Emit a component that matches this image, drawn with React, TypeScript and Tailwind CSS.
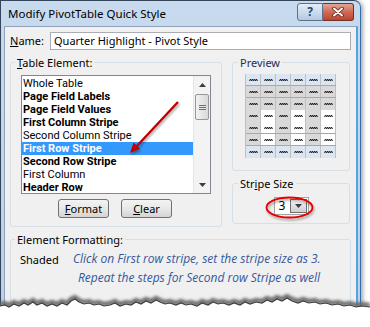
import React from "react";

const ITEMS = [
  { label: "Whole Table", bold: false },
  { label: "Page Field Labels", bold: true },
  { label: "Page Field Values", bold: true },
  { label: "First Column Stripe", bold: true },
  { label: "Second Column Stripe", bold: false },
  { label: "First Row Stripe", bold: true, selected: true },
  { label: "Second Row Stripe", bold: true },
  { label: "First Column", bold: false },
  { label: "Header Row", bold: true },
];

const FILL: Record<string, string> = {
  b: "bg-[#dce6f2]",
  g: "bg-[#d9d9d9]",
  w: "bg-white",
};

const PREVIEW_ROWS = [
  { cells: "bbbbbb", line: true },
  { cells: "gggggg", line: true },
  { cells: "gggggg", line: false },
  { cells: "gwgwgw", line: false },
  { cells: "gwgwgw", line: true },
  { cells: "gwgwgw", line: true },
  { cells: "bbbbbb", line: false },
];

const TORN = [
  [0, 306], [5, 305], [9, 307], [14, 304], [19, 306], [24, 303], [28, 305], [33, 302],
  [37, 305], [42, 303], [47, 306], [52, 304], [57, 306], [62, 303], [67, 305], [71, 301],
  [75, 299], [79, 302], [84, 304], [89, 303], [94, 305], [99, 304], [104, 306], [110, 305],
  [115, 303], [120, 306], [126, 304], [131, 305], [136, 302], [141, 304], [146, 301],
  [151, 303], [156, 300], [160, 302], [165, 304], [170, 303], [176, 305], [181, 303],
  [186, 305], [191, 304], [197, 306], [202, 303], [208, 305], [213, 302], [218, 304],
  [223, 303], [229, 305], [234, 303], [240, 305], [245, 302], [250, 304], [256, 302],
  [262, 303], [267, 300], [272, 302], [277, 299], [282, 301], [287, 298], [292, 301],
  [298, 303], [303, 301], [309, 303], [315, 302], [320, 304], [326, 303], [332, 305],
  [338, 304], [344, 306], [350, 305], [356, 307], [362, 306], [370, 307],
];

function Squiggle() {
  return (
    <svg width="9" height="4" viewBox="0 0 9 4">
      <polyline
        points="0.5,3 1.5,1 2.5,3 3.5,1 4.5,3 5.5,1 6.5,3 7.5,1 8.5,3"
        fill="none"
        stroke="#111"
        strokeWidth="0.9"
      />
    </svg>
  );
}

function Tri({ down }: { down?: boolean }) {
  return (
    <svg width="7" height="4" viewBox="0 0 7 4">
      <polygon points={down ? "0,0 7,0 3.5,4" : "0,4 7,4 3.5,0"} fill="#3c3c3c" />
    </svg>
  );
}

function WinButton({ children }: { children: React.ReactNode }) {
  return (
    <button className="w-[51px] h-[19px] rounded-[3px] border border-[#707070] bg-linear-to-b from-[#f3f3f3] via-[#e8e8e8] to-[#d4d4d4] text-[11px] leading-none text-black">
      {children}
    </button>
  );
}

export default function App() {
  const tornPath =
    "M" + TORN.map(([x, y]) => `${x},${y}`).join(" L") + " L370,327 L0,327 Z";
  const tornLine = "M" + TORN.map(([x, y]) => `${x},${y}`).join(" L");

  return (
    <div className="relative w-[370px] h-[327px] bg-white overflow-hidden font-['Noto_Sans',sans-serif] text-[11px] text-black">
      <div className="w-[361px] h-[316px] border border-[#34455a] border-r-[#2f6fae] rounded-tr-[7px] bg-linear-to-b from-[#c7daee] to-[#bcd1e9] pl-[3px] pr-[2px] flex flex-col shadow-[2px_1px_4px_rgba(0,0,0,0.35)]">
        {/* title bar */}
        <div className="h-[25px] flex items-start">
          <div className="pl-[4px] pt-[5px] text-[11.5px] leading-[15px]">Modify PivotTable Quick Style</div>
          <div className="ml-auto mt-[2px] mr-[4px] flex">
            <div className="w-[26px] h-[18px] rounded-l-[3px] border border-[#5f718a] bg-linear-to-b from-[#e3edf8] to-[#b3cae4] flex items-center justify-center text-[12px] font-bold leading-none text-[#2d4669]">
              ?
            </div>
            <div className="w-[31px] h-[18px] rounded-r-[3px] border border-l-0 border-[#6e3228] bg-linear-to-b from-[#e3a595] via-[#cf6a55] to-[#c0432e] flex items-center justify-center">
              <svg width="12" height="10" viewBox="0 0 12 10">
                <path d="M2,1.5 L10,8.5 M10,1.5 L2,8.5" stroke="#5a2218" strokeWidth="3.6" strokeLinecap="round" />
                <path d="M2,1.5 L10,8.5 M10,1.5 L2,8.5" stroke="#fff" strokeWidth="2" strokeLinecap="round" />
              </svg>
            </div>
          </div>
        </div>

        {/* client area */}
        <div className="flex-1 bg-[#f0f0f0] border border-b-0 border-[#8fa3bd] border-r-[#5aa2dc] border-r-2 px-[5px] pt-[5px] flex flex-col">
          <div className="flex items-center h-[18px]">
            <span>
              <span className="underline">N</span>ame:
            </span>
            <div className="ml-auto w-[301px] h-[18px] border border-[#abadb3] bg-white pl-[3px] flex items-center">
              Quarter Highlight - Pivot Style
            </div>
          </div>

          <div className="mt-[5px] flex gap-[10px]">
            <fieldset className="w-[212px] border border-[#d5dfe5] rounded-[3px] px-[10px] pt-[5px] pb-[8px]">
              <legend className="-ml-[6px] px-[2px] leading-[15px]">
                <span className="underline">T</span>able Element:
              </legend>
              <div className="h-[119px] border border-[#828790] bg-white flex">
                <div className="flex-1 pt-[1px] font-['Roboto',sans-serif] text-[11px]">
                  {ITEMS.map((it) => (
                    <div
                      key={it.label}
                      className={
                        "h-[13px] pl-[1px] whitespace-nowrap leading-[13px] " +
                        (it.bold ? "font-bold " : "") +
                        (it.selected ? "bg-[#3399ff] text-white" : "")
                      }
                    >
                      {it.label}
                    </div>
                  ))}
                </div>
                <div className="w-[17px] border-l border-[#e6e6e6] bg-[#f3f3f3] flex flex-col items-center">
                  <div className="h-[17px] flex items-center justify-center">
                    <Tri />
                  </div>
                  <div className="mt-[1px] w-[14px] h-[26px] rounded-[2px] border border-[#979797] bg-linear-to-r from-[#f2f2f2] to-[#d9d9d9] flex flex-col items-center justify-center gap-[1px]">
                    <div className="w-[7px] h-px bg-[#6f6f6f]" />
                    <div className="w-[7px] h-px bg-[#6f6f6f]" />
                    <div className="w-[7px] h-px bg-[#6f6f6f]" />
                  </div>
                  <div className="mt-auto h-[17px] flex items-center justify-center">
                    <Tri down />
                  </div>
                </div>
              </div>
              <div className="mt-[5px] flex gap-[12px] pl-[37px]">
                <WinButton>
                  <span className="underline">F</span>ormat
                </WinButton>
                <WinButton>
                  <span className="underline">C</span>lear
                </WinButton>
              </div>
            </fieldset>

            <div className="w-[118px] flex flex-col">
              <fieldset className="border border-[#d5dfe5] rounded-[3px] pl-[12px] pt-[4px] pb-[12px]">
                <legend className="-ml-[7px] px-[2px] leading-[15px] text-[#1d2f55]">Preview</legend>
                <div className="w-[91px] border-l border-[#c0c0c0]">
                  {PREVIEW_ROWS.map((row, r) => (
                    <div
                      key={r}
                      className={"h-[12px] flex " + (row.line ? "border-b border-[#95abc9]" : "")}
                    >
                      {row.cells.split("").map((c, i) => (
                        <div
                          key={i}
                          className={"w-[15px] border-r border-[#c0c0c0] flex items-center justify-center " + FILL[c]}
                        >
                          <Squiggle />
                        </div>
                      ))}
                    </div>
                  ))}
                </div>
              </fieldset>

              <fieldset className="mt-[5px] border border-[#d5dfe5] rounded-[3px] pt-[6px] pb-[8px] flex justify-center">
                <legend className="ml-[5px] px-[2px] leading-[15px]">
                  Str<span className="underline">i</span>pe Size
                </legend>
                <div className="mx-auto w-[35px] h-[18px] border border-[#a5a5a5] bg-white flex items-center">
                  <span className="pl-[4px] text-[12px] leading-none">3</span>
                  <div className="ml-auto mr-px w-[17px] h-[14px] border border-[#707070] bg-linear-to-b from-[#f2f2f2] to-[#cfcfcf] flex items-center justify-center">
                    <Tri down />
                  </div>
                </div>
              </fieldset>
            </div>
          </div>

          <fieldset className="mt-[5px] flex-1 border border-[#d5dfe5] rounded-[3px] pl-[9px] pt-[2px]">
            <legend className="-ml-[5px] px-[2px] leading-[15px]">Element Formatting:</legend>
            <div className="flex">
              <div className="w-[53px] pt-[2px] leading-[17px]">Shaded</div>
              <div className="font-['Open_Sans',sans-serif] italic text-[12px] leading-[19px] text-[#34579b]">
                <div>Click on First row stripe, set the stripe size as 3.</div>
                <div className="pl-[5px]">Repeat the steps for Second row Stripe as well</div>
              </div>
            </div>
          </fieldset>
        </div>
      </div>

      {/* annotations and torn edge */}
      <svg className="absolute left-0 top-0 pointer-events-none" width="370" height="327" viewBox="0 0 370 327">
        <defs>
          <filter id="sh" x="-20%" y="-20%" width="140%" height="160%">
            <feDropShadow dx="1" dy="2" stdDeviation="1.2" floodColor="#000" floodOpacity="0.35" />
          </filter>
          <filter id="blur" x="-5%" y="-50%" width="110%" height="200%">
            <feGaussianBlur stdDeviation="1.5" />
          </filter>
        </defs>
        <g filter="url(#sh)">
          <line x1="178" y1="102" x2="136" y2="147" stroke="#c00000" strokeWidth="2.4" />
          <polygon points="130,153 140.1,148.8 133.6,142.6" fill="#c00000" />
          <ellipse cx="289.5" cy="207.5" rx="23" ry="10" fill="none" stroke="#e60000" strokeWidth="1.8" />
        </g>
        <path d={tornLine} transform="translate(0,-2)" stroke="#666" strokeWidth="4" fill="none" filter="url(#blur)" />
        <path d={tornPath} fill="#fff" />
        <path d={tornLine} stroke="#3a3a3a" strokeWidth="1.2" fill="none" />
      </svg>
    </div>
  );
}
